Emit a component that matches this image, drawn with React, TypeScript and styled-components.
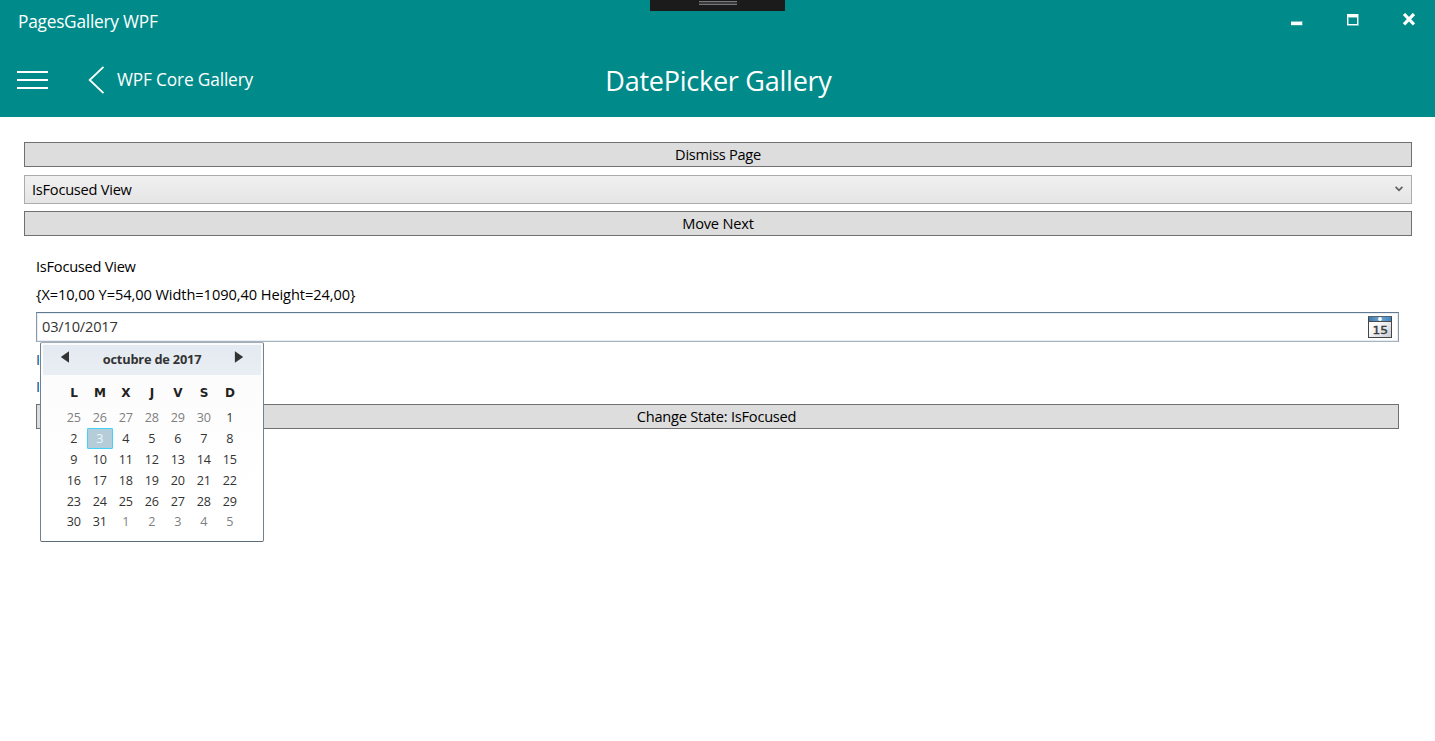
import React from "react";
import styled, { createGlobalStyle } from "styled-components";

const GlobalStyle = createGlobalStyle`
  * { box-sizing: border-box; }
  body {
    margin: 0;
    background: #fff;
    color: #000;
    font-family: "Open Sans", "Noto Sans", sans-serif;
    overflow: hidden;
  }
  button { font-family: inherit; border: 0; padding: 0; background: none; color: inherit; }
`;

const Window = styled.div`
  position: relative;
  height: 741px;
  display: flex;
  flex-direction: column;
`;

const Header = styled.header`
  height: 117px;
  background: #008b8a;
  color: #fff;
  display: flex;
  flex-direction: column;
`;

const DebugHandle = styled.div`
  position: absolute;
  top: 0;
  left: 650px;
  width: 135px;
  height: 11px;
  background: #1b1b1c;
  display: flex;
  justify-content: center;
  padding-top: 1px;
`;

const Grip = styled.div`
  width: 38px;
  height: 4px;
  background: #3a3a3c;
  border-top: 1px solid #77777a;
  border-bottom: 1px solid #77777a;
`;

const TitleBar = styled.div`
  height: 43px;
  display: flex;
  justify-content: space-between;
  padding-left: 18px;
`;

const Text = styled.span<{ $size: number; $track?: number; $line?: number }>`
  font-size: ${(p) => p.$size}px;
  letter-spacing: ${(p) => p.$track ?? 0}px;
  line-height: ${(p) => p.$line ?? 24}px;
  white-space: pre;
`;

const BodyText = styled.span<{ $track?: number }>`
  display: block;
  padding-bottom: 2px;
  font-size: 14.6px;
  letter-spacing: ${(p) => p.$track ?? -0.24}px;
  line-height: 20px;
  white-space: pre;
`;

const WindowTitle = styled(Text)`
  padding-top: 10px;
`;

const PageTitle = styled(Text)`
  padding: 2px 0 0 2px;
`;

const WindowButtons = styled.div`
  display: flex;
  padding: 13px 20px 0 0;
  gap: 43px;
`;

const WindowButton = styled.button`
  width: 13px;
  height: 13px;
  svg { display: block; }
`;

const NavBar = styled.nav`
  height: 74px;
  display: grid;
  grid-template-columns: 1fr auto 1fr;
  align-items: center;
`;

const NavStart = styled.div`
  display: flex;
  align-items: center;
  padding-left: 17px;
  svg { display: block; }
`;

const BackButton = styled.button`
  display: flex;
  align-items: center;
  gap: 12px;
  margin: -1px 0 0 40px;
`;

const BackLabel = styled(Text)`
  padding-top: 1px;
`;

const Main = styled.main`
  padding: 25px 23px 0 24px;
  display: flex;
  flex-direction: column;
`;

const Button = styled.button`
  height: 25px;
  width: 100%;
  background: #ddd;
  border: 1px solid #707070;
  display: flex;
  justify-content: center;
  align-items: center;
`;

const StateButton = styled(Button)`
  padding-right: 2px;
`;

const ComboBox = styled.div`
  height: 29px;
  margin: 8px 0 7px;
  padding: 0 8px 0 7px;
  border: 1px solid #acacac;
  background: linear-gradient(#f0f0f0, #e5e5e5);
  display: flex;
  justify-content: space-between;
  align-items: center;
  svg { margin-top: -1px; }
`;

const ViewPanel = styled.section`
  margin: 19px 13px 0 12px;
  display: flex;
  flex-direction: column;
`;

const Line = styled.div<{ $height: number }>`
  height: ${(p) => p.$height}px;
  display: flex;
  align-items: center;
`;

const StateLines = styled.div`
  height: 62px;
  padding-top: 7px;
  display: flex;
  flex-direction: column;
  gap: 5px;
  color: #004c8c;
`;

const DateField = styled.div`
  position: relative;
  height: 30px;
  margin-top: 2px;
  padding: 0 6px 0 5px;
  border: 1px solid;
  border-color: #5f7a90 #8798a8 #a6b3bf #8798a8;
  box-shadow: inset 0 0 0 1px #e9edf1;
  color: #333;
  display: flex;
  justify-content: space-between;
  align-items: center;
`;

const Popup = styled.div`
  position: absolute;
  left: 3px;
  top: 29px;
  width: 224px;
  height: 200px;
  padding: 2px;
  border: 1px solid;
  border-color: #a3aeb9 #72818f #5a6b7c #72818f;
  border-radius: 2px;
  background: linear-gradient(#fbfbfb, #fff 75%);
`;

const MonthBar = styled.div`
  height: 30px;
  padding: 0 17px 0 17px;
  background: linear-gradient(#e4eaf1, #e9eef3);
  display: flex;
  justify-content: space-between;
  svg { display: block; margin-top: 6px; }
`;

const MonthName = styled(Text)`
  font-weight: 700;
  padding: 2px 2px 0 0;
`;

const Days = styled.div`
  width: 182px;
  margin: 6px 0 0 18px;
  display: grid;
  grid-template-columns: repeat(7, 26px);
  grid-template-rows: 26px;
  grid-auto-rows: 20.9px;
`;

const DayName = styled.span`
  font: 700 12px/24px "DejaVu Sans", sans-serif;
  text-align: center;
  color: #222;
`;

const Day = styled.span<{ $muted?: boolean; $selected?: boolean }>`
  display: flex;
  justify-content: center;
  align-items: center;
  padding-right: 0.6px;
  font-size: 12.6px;
  letter-spacing: -0.2px;
  color: ${(p) => (p.$selected ? "#eef6f9" : p.$muted ? "#7f7f7f" : "#333")};
  ${(p) =>
    p.$selected &&
    "background: #b4cdd8; border: 1px solid #45d0f5; border-radius: 1px;"}
`;

const weekdays = ["L", "M", "X", "J", "V", "S", "D"];

const days = [
  ...[25, 26, 27, 28, 29, 30].map((n) => ({ n, muted: true })),
  ...Array.from({ length: 31 }, (_, i) => ({ n: i + 1, muted: false })),
  ...[1, 2, 3, 4, 5].map((n) => ({ n, muted: true })),
];

function Calendar() {
  return (
    <Popup>
      <MonthBar>
        <svg width="12" height="12" viewBox="0 0 12 12" fill="#333">
          <path d="M.8 6 9 0.3V11.7Z" />
        </svg>
        <MonthName $size={12.8} $track={-0.2} $line={25}>octubre de 2017</MonthName>
        <svg width="10" height="12" viewBox="0 0 10 12" fill="#333">
          <path d="M9.2 6 .9 .3V11.7Z" />
        </svg>
      </MonthBar>
      <Days>
        {weekdays.map((d) => (
          <DayName key={d}>{d}</DayName>
        ))}
        {days.map((d, i) => (
          <Day key={i} $muted={d.muted} $selected={!d.muted && d.n === 3}>
            {d.n}
          </Day>
        ))}
      </Days>
    </Popup>
  );
}

function CalendarIcon() {
  return (
    <svg width="24" height="22" viewBox="0 0 24 22">
      <defs>
        <linearGradient id="page" x1="0" y1="0" x2="1" y2="1">
          <stop offset="0.3" stopColor="#fff" />
          <stop offset="1" stopColor="#c9cbd2" />
        </linearGradient>
        <linearGradient id="band" x1="0" y1="0" x2="1" y2="0">
          <stop offset="0" stopColor="#3f78ad" />
          <stop offset="0.5" stopColor="#6fa6d4" />
          <stop offset="1" stopColor="#3f86c2" />
        </linearGradient>
      </defs>
      <rect x="0.5" y="0.5" width="23" height="21" fill="url(#page)" stroke="#454545" />
      <rect x="1" y="1" width="22" height="4" fill="url(#band)" />
      <path d="M0 .5H24" stroke="#55616d" />
      <path d="M0 5.5H24" stroke="#4a4a4a" />
      <circle cx="12" cy="3" r="1.9" fill="#fff" />
      <text x="12.2" y="17.5" textAnchor="middle" fontFamily="DejaVu Sans" fontSize="10.5" stroke="#3c3c3c" strokeWidth="0.4" textLength="15.5" lengthAdjust="spacingAndGlyphs" fill="#3c3c3c">15</text>
    </svg>
  );
}

export default function App() {
  return (
    <Window>
      <GlobalStyle />
      <Header>
        <TitleBar>
          <WindowTitle $size={17.3} $track={-0.24}>PagesGallery WPF</WindowTitle>
          <WindowButtons>
            <WindowButton aria-label="Minimize">
              <svg width="13" height="13">
                <path d="M1 8h11.6v4.4H1z" fill="#fff" opacity=".45" />
                <path d="M1 9h11v3H1z" fill="#fff" />
              </svg>
            </WindowButton>
            <WindowButton aria-label="Maximize">
              <svg width="13" height="13">
                <path d="M1 1h12v12H1zM3 5v6h8V5z" fill="#fff" fillRule="evenodd" opacity=".45" />
                <path d="M1 1h11v11H1zM2 4v7h9V4z" fill="#fff" fillRule="evenodd" />
              </svg>
            </WindowButton>
            <WindowButton aria-label="Close">
              <svg width="13" height="13" stroke="#fff" strokeWidth="3.2">
                <path d="M2 1 12 11.4M12 1 2 11.4" />
              </svg>
            </WindowButton>
          </WindowButtons>
        </TitleBar>
        <NavBar>
          <NavStart>
            <svg width="31" height="18" fill="#fff">
              <path d="M0 0h31v2H0zM0 8h31v2H0zM0 16h31v2H0z" />
            </svg>
            <BackButton>
              <svg width="17" height="28" fill="none" stroke="#fff" strokeWidth="1.8">
                <path d="M15.5 .8 1.7 14 15.5 27.2" />
              </svg>
              <BackLabel $size={17.3} $track={-0.16}>WPF Core Gallery</BackLabel>
            </BackButton>
          </NavStart>
          <PageTitle $size={27} $track={-0.25} $line={36}>DatePicker Gallery</PageTitle>
          <span />
        </NavBar>
      </Header>
      <DebugHandle>
        <Grip />
      </DebugHandle>
      <Main>
        <Button><BodyText $track={-0.28}>Dismiss Page</BodyText></Button>
        <ComboBox>
          <BodyText>IsFocused View</BodyText>
          <svg width="8" height="6" fill="none" stroke="#606060" strokeWidth="1.7">
            <path d="M.6 .8 4 4.3 7.4 .8" />
          </svg>
        </ComboBox>
        <Button><BodyText $track={-0.18}>Move Next</BodyText></Button>
        <ViewPanel>
          <Line $height={24}>
            <BodyText>IsFocused View</BodyText>
          </Line>
          <Line $height={31}>
            <BodyText $track={-0.07}>{"{X=10,00 Y=54,00 Width=1090,40 Height=24,00}"}</BodyText>
          </Line>
          <DateField>
            <BodyText $track={-0.18}>03/10/2017</BodyText>
            <CalendarIcon />
            <Calendar />
          </DateField>
          <StateLines>
            <BodyText>I</BodyText>
            <BodyText>I</BodyText>
          </StateLines>
          <StateButton><BodyText $track={-0.23}>Change State: IsFocused</BodyText></StateButton>
        </ViewPanel>
      </Main>
    </Window>
  );
}
